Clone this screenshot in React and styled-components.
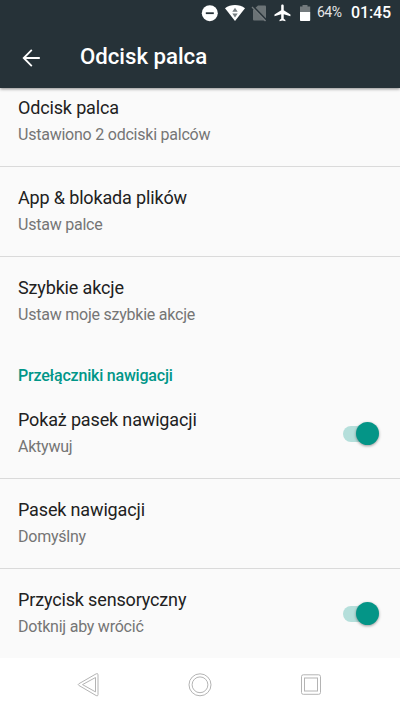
import React from 'react';
import styled, { createGlobalStyle } from 'styled-components';

const GlobalStyle = createGlobalStyle`
    * { box-sizing: border-box; }
    body {
        margin: 0;
        background: #fafafa;
        font-family: Roboto, "Noto Sans", sans-serif;
        overflow: hidden;
    }
    svg { display: block; }
`

const Screen = styled.div`
    width: 400px;
    height: 711px;
    display: flex;
    flex-direction: column;
    background: #fafafa;
`

const Header = styled.header`
    flex: none;
    height: 88px;
    background: #263238;
    color: #fff;
    position: relative;
    z-index: 1;
    box-shadow: 0 1px 3px rgba(0, 0, 0, .45);
`

const StatusBar = styled.div`
    height: 26px;
    display: flex;
    justify-content: flex-end;
    padding-right: 9px;
`

const Battery = styled.span`
    width: 25px;
    margin-left: 5px;
    font-size: 14px;
    letter-spacing: -.5px;
    line-height: 25px;
    color: #e4e6e7;
`

const Clock = styled.span`
    width: 40px;
    margin-left: 9px;
    font-size: 16px;
    letter-spacing: -.1px;
    font-weight: 500;
    line-height: 26px;
    white-space: nowrap;
`

const Toolbar = styled.div`
    height: 62px;
    display: flex;
    align-items: center;
    padding-left: 22px;
`

const BackButton = styled.button`
    width: 18px;
    height: 18px;
    padding: 0;
    margin-top: 2px;
    border: 0;
    background: none;
    color: #fff;
`

const Title = styled.h1`
    margin: 0 0 0 40px;
    font-size: 22.2px;
    font-weight: 500;
    line-height: 60px;
    padding-bottom: 2px;
`

const List = styled.main`
    flex: none;
    height: 570px;
    overflow: hidden;
`

// list is scrolled a little, the first row slides under the header
const Scrolled = styled.div`
    margin-top: -11px;
`

const StyledRow = styled.div`
    height: ${props => props.$divider ? 90 : 89}px;
    border-bottom: ${props => props.$divider ? '1px solid #dadada' : '0'};
    padding: 0 20px 0 18px;
    display: flex;
    align-items: center;
    justify-content: space-between;
`

const Label = styled.div`
    font-size: 18px;
    letter-spacing: -.15px;
    line-height: 25px;
    padding-bottom: 2px;
    color: #212121;
`

const Summary = styled.div`
    font-size: 16px;
    letter-spacing: -.23px;
    line-height: 26px;
    color: #757575;
`

const Section = styled.h2`
    height: 43px;
    margin: 0;
    padding: 9px 18px 0;
    font-size: 16px;
    letter-spacing: -.2px;
    font-weight: 500;
    line-height: 41px;
    color: #009688;
`

const Track = styled.div`
    width: 31px;
    height: 16px;
    margin-right: 6px;
    border-radius: 8px;
    background: #b5dfdb;
    display: flex;
    align-items: center;
`

const Thumb = styled.div`
    flex: none;
    width: 23px;
    height: 23px;
    margin-left: 13px;
    border-radius: 50%;
    background: #049587;
    box-shadow: 0 1px 3px rgba(0, 0, 0, .4);
`

const NavBar = styled.nav`
    flex: 1;
    background: #fff;
    display: flex;
    align-items: center;
    justify-content: space-between;
    padding: 0 77px;
`

const StatusIcons = () => (
    <svg width="112" height="26" viewBox="200 0 112 26">
        <circle cx="209.8" cy="13.2" r="8" fill="#fff" />
        <path d="M205.8 13.2h8" stroke="#263238" strokeWidth="1.8" />
        <path d="M225 8.2C230.500 4 239.500 4 245 8.200L235 21z" fill="#fff" />
        <path d="M235 7.800l2.700 4h-5.400zM235 17.500l2.700-4h-5.400z" fill="#777f82" />
        <path d="M258 5.500h7q1 0 1 1V20.500h-12q-1 0-1-1V10z" fill="#6b7376" />
        <path d="M253 6l14 14.500" stroke="#263238" strokeWidth="1.600" />
        <path d="M252 7l13.500 14" stroke="#737a7d" strokeWidth="1.300" />
        <path
            transform="translate(272.800 2.800) scale(.84)"
            d="M21 16v-2l-8-5V3.500c0-.83-.67-1.500-1.500-1.500S10 2.670 10 3.500V9l-8 5v2l8-2.500V19l-2 1.500V22l3.500-1 3.500 1v-1.500L13 19v-5.500l8 2.500z"
            fill="#fff"
        />
        <path d="M300 6.500h2.500V5h5v1.500h2.700V12H300z" fill="#737a7d" />
        <path d="M300 12h10.200v8.200q0 .8-.8.800h-8.600q-.8 0-.8-.8z" fill="#fff" />
    </svg>
)

const BackArrow = () => (
    <svg width="18" height="18" viewBox="0 0 18 18" fill="none" stroke="currentColor" strokeWidth="1.800">
        <path d="M17.800 9H1.800M9.800.9L1.700 9l8.100 8.100" />
    </svg>
)

const Switch = () => (
    <Track>
        <Thumb />
    </Track>
)

const Row = ({ label, summary, divider, toggle }) => (
    <StyledRow $divider={divider}>
        <div>
            <Label>{label}</Label>
            <Summary>{summary}</Summary>
        </div>
        {toggle && <Switch />}
    </StyledRow>
)

const App = () => (
    <>
        <GlobalStyle />
        <Screen>
            <Header>
                <StatusBar>
                    <StatusIcons />
                    <Battery>64%</Battery>
                    <Clock>01:45</Clock>
                </StatusBar>
                <Toolbar>
                    <BackButton aria-label="Wstecz"><BackArrow /></BackButton>
                    <Title>Odcisk palca</Title>
                </Toolbar>
            </Header>
            <List>
                <Scrolled>
                    <Row label="Odcisk palca" summary="Ustawiono 2 odciski palców" divider />
                    <Row label="App &amp; blokada plików" summary="Ustaw palce" divider />
                    <Row label="Szybkie akcje" summary="Ustaw moje szybkie akcje" />
                    <Section>Przełączniki nawigacji</Section>
                    <Row label="Pokaż pasek nawigacji" summary="Aktywuj" divider toggle />
                    <Row label="Pasek nawigacji" summary="Domyślny" divider />
                    <Row label="Przycisk sensoryczny" summary="Dotknij aby wrócić" toggle />
                </Scrolled>
            </List>
            <NavBar>
                <svg width="24" height="26" viewBox="0 0 24 26" fill="none" stroke="#b4b4b4" strokeLinejoin="round">
                    <path d="M19.200 1.800L1.800 11.800q-1.200.8 0 1.600l17.400 10.200q1.800.9 1.800-1V2.800q0-1.800-1.800-1z" />
                    <path d="M18.500 5.500v14.400L5.500 12.600z" />
                </svg>
                <svg width="26" height="26" viewBox="0 0 26 26" fill="none" stroke="#b4b4b4">
                    <circle cx="13" cy="12.800" r="11" />
                    <circle cx="13" cy="12.800" r="7.900" />
                </svg>
                <svg width="24" height="26" viewBox="0 0 24 26" fill="none" stroke="#b4b4b4">
                    <rect x="2.500" y="2.800" width="19" height="19.500" rx="1.800" />
                    <rect x="5.500" y="6" width="13" height="13" />
                </svg>
            </NavBar>
        </Screen>
    </>
)

export default App;
